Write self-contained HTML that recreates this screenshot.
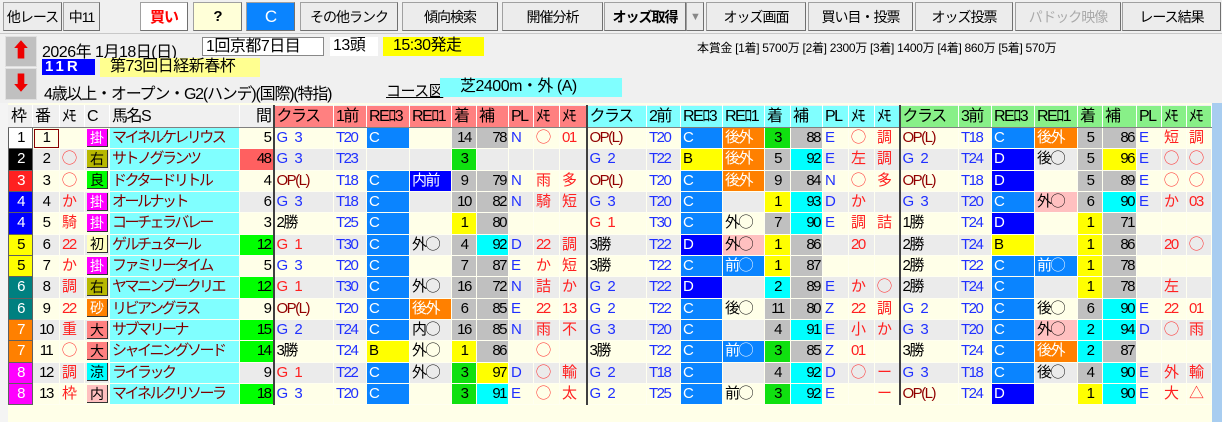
<!DOCTYPE html>
<html><head><meta charset="utf-8"><style>
*{margin:0;padding:0;box-sizing:border-box}
body{width:1222px;height:422px;overflow:hidden;background:#f0f0f0;font-family:"Liberation Sans","Noto Sans CJK JP",sans-serif;position:relative;color:#000}
.bt{position:absolute;top:2px;height:29px;background:#ececec;border:1px solid #a0a0a0;border-right-color:#707070;border-bottom-color:#707070;font-size:14px;display:flex;align-items:center;justify-content:center;letter-spacing:-1px}
.ab{position:absolute;font-size:15px;white-space:nowrap;letter-spacing:-0.5px}
table{position:absolute;left:8px;top:105px;border-collapse:collapse;table-layout:fixed;width:1203px;font-size:15px;letter-spacing:-1.5px}
td{height:21.33px;border:1px solid #fffff0;padding:0 2px;white-space:nowrap;overflow:hidden;line-height:18px}
tr.h td{height:22px;font-size:16px;background:#f0f0f0;border-color:#f0f0f0 #fff #f0f0f0 #f0f0f0;border-bottom:1px solid #808080}
tr.h td.s{background:#ff8080}tr.h td.q{background:#80ffff}tr.h td.n{background:#88f088}
tr.o td{background:#ffffe8}tr.e td{background:#ebebeb}
tr td.nm{background:#80ffff;color:#800000;letter-spacing:-2.5px}
td.w{text-align:center;border:1px solid #606060}
td.r{text-align:right}td.ct{text-align:center}
.L{border-left:2px solid #404040!important}
.bl{color:#2030ff}.rd{color:#ff2020}.dr{color:#900000}
td.bl.L,td.rd.L{letter-spacing:1px}
tr td.c{background:#0a84ff;color:#fff}tr td.d{background:#0000ff;color:#fff}tr td.b{background:#ffff00}
tr td.ko{background:#ff8000;color:#fff}tr td.pk{background:#ffc0c0}
tr td.g{background:#c0c0c0}tr td.y{background:#ffff00}tr td.gr{background:#10e010}tr td.cy{background:#00ffff}tr td.lg{background:#00ff00}tr td.sa{background:#ff6060}
.bd{display:inline-block;width:21px;height:18px;border:1px solid #333;border-width:0 1px 1px 0;text-align:center;letter-spacing:0;font-size:14px}
</style></head><body>
<div class="bt" style="left:3px;width:59px">他レース</div>
<div class="bt" style="left:63px;width:37px">中11</div>
<div class="bt" style="left:140px;width:48px;background:#fff;color:#ff0000;font-weight:bold;font-size:15px">買い</div>
<div class="bt" style="left:193px;width:49px;background:#ffffd8;font-weight:bold;font-size:15px">?</div>
<div class="bt" style="left:246px;width:49px;background:#0a84ff;color:#fff;font-size:17px">C</div>
<div class="bt" style="left:300px;width:98px">その他ランク</div>
<div class="bt" style="left:402px;width:96px">傾向検索</div>
<div class="bt" style="left:502px;width:101px">開催分析</div>
<div class="bt" style="left:604px;width:82px;font-weight:bold">オッズ取得</div>
<div class="bt" style="left:686px;width:18px;color:#888;font-size:11px">▼</div>
<div class="bt" style="left:706px;width:100px">オッズ画面</div>
<div class="bt" style="left:808px;width:105px">買い目・投票</div>
<div class="bt" style="left:915px;width:98px">オッズ投票</div>
<div class="bt" style="left:1015px;width:106px;color:#aaa">パドック映像</div>
<div class="bt" style="left:1122px;width:99px">レース結果</div>
<div style="position:absolute;left:0;top:33px;width:1222px;height:1px;background:#c8c8c8"></div>
<div style="position:absolute;left:5px;top:36px;width:32px;height:31px;background:#c0c0c0;border:1px solid #e0e0e0;color:#e00;font-size:20px;text-align:center;line-height:28px">⬆</div>
<div style="position:absolute;left:5px;top:68px;width:32px;height:32px;background:#c0c0c0;border:1px solid #e0e0e0;color:#e00;font-size:20px;text-align:center;line-height:30px">⬇</div>
<div class="ab" style="left:42px;top:38px;font-size:16px">2026年 1月18日(日)</div>
<div class="ab" style="left:202px;top:37px;width:122px;height:19px;background:#fff;border:1px solid #888;padding-left:3px;line-height:17px;font-size:16px">1回京都7日目</div>
<div class="ab" style="left:330px;top:37px;width:48px;height:19px;background:#fff;padding-left:3px;line-height:17px;font-size:16px">13頭</div>
<div class="ab" style="left:383px;top:37px;width:101px;height:19px;background:#ffff00;padding-left:10px;line-height:18px;font-size:16px">15:30発走</div>
<div class="ab" style="left:42px;top:59px;width:53px;height:16px;background:#0000ff;color:#fff;font-size:15px;line-height:16px;font-weight:bold;letter-spacing:3px;padding-left:3px">11R</div>
<div class="ab" style="left:100px;top:58px;width:160px;height:19px;background:#ffff90;padding-left:10px;line-height:18px;font-size:16px">第73回日経新春杯</div>
<div class="ab" style="left:44px;top:80px;letter-spacing:-1.2px;font-size:16px">4歳以上・オープン・G2(ハンデ)(国際)(特指)</div>
<div class="ab" style="left:386px;top:80px;text-decoration:underline;font-size:15px">コース図</div>
<div class="ab" style="left:440px;top:78px;width:182px;height:19px;background:#80ffff;padding-left:20px;line-height:18px;font-size:16px">芝2400m・外 (A)</div>
<div class="ab" style="left:697px;top:39px;font-size:12px;letter-spacing:-0.3px">本賞金 [1着] 5700万 [2着] 2300万 [3着] 1400万 [4着] 860万 [5着] 570万</div>
<div style="position:absolute;left:0;top:103px;width:1222px;height:319px;background:#ffffe8"></div>
<div style="position:absolute;left:0;top:103px;width:8px;height:319px;background:#f4f4f4"></div>
<div style="position:absolute;left:1212px;top:103px;width:10px;height:319px;background:#a8cdf0"></div>
<table>
<colgroup><col style="width:24px"><col style="width:27px"><col style="width:25px"><col style="width:25px"><col style="width:130px"><col style="width:34px"><col style="width:60px"><col style="width:33px"><col style="width:43px"><col style="width:42px"><col style="width:25px"><col style="width:32px"><col style="width:25px"><col style="width:26px"><col style="width:27px"><col style="width:60px"><col style="width:34px"><col style="width:42px"><col style="width:42px"><col style="width:26px"><col style="width:32px"><col style="width:26px"><col style="width:26px"><col style="width:25px"><col style="width:59px"><col style="width:33px"><col style="width:43px"><col style="width:43px"><col style="width:25px"><col style="width:34px"><col style="width:25px"><col style="width:25px"><col style="width:25px"></colgroup>
<tr class="h"><td>枠</td><td>番</td><td>ﾒﾓ</td><td>C</td><td>馬名S</td><td class="r">間</td><td class="s L">クラス</td><td class="s">1前</td><td class="s">REﾛ3</td><td class="s">REﾛ1</td><td class="s">着</td><td class="s">補</td><td class="s">PL</td><td class="s">ﾒﾓ</td><td class="s">ﾒﾓ</td><td class="q L">クラス</td><td class="q">2前</td><td class="q">REﾛ3</td><td class="q">REﾛ1</td><td class="q">着</td><td class="q">補</td><td class="q">PL</td><td class="q">ﾒﾓ</td><td class="q">ﾒﾓ</td><td class="n L">クラス</td><td class="n">3前</td><td class="n">REﾛ3</td><td class="n">REﾛ1</td><td class="n">着</td><td class="n">補</td><td class="n">PL</td><td class="n">ﾒﾓ</td><td class="n">ﾒﾓ</td></tr>
<tr class="o"><td class="w" style="background:#fff">1</td><td class="ct" style="outline:1px solid #800;outline-offset:-2px">1</td><td></td><td><span class="bd" style="background:#ff00ff;color:#fff">掛</span></td><td class="nm">マイネルケレリウス</td><td class="r">5</td><td class="L bl">G 3</td><td class="bl">T20</td><td class="c">C</td><td></td><td class="g ct">14</td><td class="g r">78</td><td class="bl">N</td><td class="rd">◯</td><td class="rd">01</td><td class="L dr">OP(L)</td><td class="bl">T20</td><td class="c">C</td><td class="ko">後外</td><td class="gr ct">3</td><td class="g r">88</td><td class="bl">E</td><td class="rd">◯</td><td class="rd">調</td><td class="L dr">OP(L)</td><td class="bl">T18</td><td class="c">C</td><td class="ko">後外</td><td class="g ct">5</td><td class="g r">86</td><td class="bl">E</td><td class="rd">短</td><td class="rd">調</td></tr>
<tr class="e"><td class="w" style="background:#000;color:#fff">2</td><td class="ct">2</td><td class="rd">◯</td><td><span class="bd" style="background:#b8b800">右</span></td><td class="nm">サトノグランツ</td><td class="r sa">48</td><td class="L bl">G 3</td><td class="bl">T23</td><td></td><td></td><td class="gr ct">3</td><td></td><td></td><td></td><td></td><td class="L bl">G 2</td><td class="bl">T22</td><td class="b">B</td><td class="ko">後外</td><td class="g ct">5</td><td class="cy r">92</td><td class="bl">E</td><td class="rd">左</td><td class="rd">調</td><td class="L bl">G 2</td><td class="bl">T24</td><td class="d">D</td><td>後◯</td><td class="g ct">5</td><td class="y r">96</td><td class="bl">E</td><td class="rd">◯</td><td class="rd">◯</td></tr>
<tr class="o"><td class="w" style="background:#ff2020;color:#fff">3</td><td class="ct">3</td><td class="rd">◯</td><td><span class="bd" style="background:#00ff00">良</span></td><td class="nm">ドクタードリトル</td><td class="r">4</td><td class="L dr">OP(L)</td><td class="bl">T18</td><td class="c">C</td><td class="d">内前</td><td class="g ct">9</td><td class="g r">79</td><td class="bl">N</td><td class="rd">雨</td><td class="rd">多</td><td class="L dr">OP(L)</td><td class="bl">T20</td><td class="c">C</td><td class="ko">後外</td><td class="g ct">9</td><td class="g r">84</td><td class="bl">N</td><td class="rd">◯</td><td class="rd">多</td><td class="L dr">OP(L)</td><td class="bl">T18</td><td class="d">D</td><td></td><td class="g ct">5</td><td class="g r">89</td><td class="bl">E</td><td class="rd">◯</td><td class="rd">◯</td></tr>
<tr class="e"><td class="w" style="background:#0000ff;color:#fff">4</td><td class="ct">4</td><td class="rd">か</td><td><span class="bd" style="background:#ff00ff;color:#fff">掛</span></td><td class="nm">オールナット</td><td class="r">6</td><td class="L bl">G 3</td><td class="bl">T18</td><td class="c">C</td><td></td><td class="g ct">10</td><td class="g r">82</td><td class="bl">N</td><td class="rd">騎</td><td class="rd">短</td><td class="L bl">G 3</td><td class="bl">T20</td><td class="c">C</td><td></td><td class="y ct">1</td><td class="cy r">93</td><td class="bl">D</td><td class="rd">か</td><td></td><td class="L bl">G 3</td><td class="bl">T20</td><td class="c">C</td><td class="pk">外◯</td><td class="g ct">6</td><td class="cy r">90</td><td class="bl">E</td><td class="rd">か</td><td class="rd">03</td></tr>
<tr class="o"><td class="w" style="background:#0000ff;color:#fff">4</td><td class="ct">5</td><td class="rd">騎</td><td><span class="bd" style="background:#ff00ff;color:#fff">掛</span></td><td class="nm">コーチェラバレー</td><td class="r">3</td><td class="L">2勝</td><td class="bl">T25</td><td class="c">C</td><td></td><td class="y ct">1</td><td class="g r">80</td><td></td><td></td><td></td><td class="L rd">G 1</td><td class="bl">T30</td><td class="c">C</td><td>外◯</td><td class="g ct">7</td><td class="cy r">90</td><td class="bl">E</td><td class="rd">調</td><td class="rd">詰</td><td class="L">1勝</td><td class="bl">T24</td><td class="d">D</td><td></td><td class="y ct">1</td><td class="g r">71</td><td></td><td></td><td></td></tr>
<tr class="e"><td class="w" style="background:#ffff00">5</td><td class="ct">6</td><td class="rd">22</td><td><span class="bd" style="background:#ffffc0">初</span></td><td class="nm">ゲルチュタール</td><td class="r lg">12</td><td class="L rd">G 1</td><td class="bl">T30</td><td class="c">C</td><td>外◯</td><td class="g ct">4</td><td class="cy r">92</td><td class="bl">D</td><td class="rd">22</td><td class="rd">調</td><td class="L">3勝</td><td class="bl">T22</td><td class="d">D</td><td class="pk">外◯</td><td class="y ct">1</td><td class="g r">86</td><td></td><td class="rd">20</td><td></td><td class="L">2勝</td><td class="bl">T24</td><td class="b">B</td><td></td><td class="y ct">1</td><td class="g r">86</td><td></td><td class="rd">20</td><td class="rd">◯</td></tr>
<tr class="o"><td class="w" style="background:#ffff00">5</td><td class="ct">7</td><td class="rd">か</td><td><span class="bd" style="background:#ff00ff;color:#fff">掛</span></td><td class="nm">ファミリータイム</td><td class="r">5</td><td class="L bl">G 3</td><td class="bl">T20</td><td class="c">C</td><td></td><td class="g ct">7</td><td class="g r">87</td><td class="bl">E</td><td class="rd">か</td><td class="rd">短</td><td class="L">3勝</td><td class="bl">T22</td><td class="c">C</td><td class="c">前◯</td><td class="y ct">1</td><td class="g r">87</td><td></td><td></td><td></td><td class="L">2勝</td><td class="bl">T22</td><td class="c">C</td><td class="c">前◯</td><td class="y ct">1</td><td class="g r">78</td><td></td><td></td><td></td></tr>
<tr class="e"><td class="w" style="background:#008080;color:#fff">6</td><td class="ct">8</td><td class="rd">調</td><td><span class="bd" style="background:#b8b800">右</span></td><td class="nm">ヤマニンブークリエ</td><td class="r lg">12</td><td class="L rd">G 1</td><td class="bl">T30</td><td class="c">C</td><td>外◯</td><td class="g ct">16</td><td class="g r">72</td><td class="bl">N</td><td class="rd">詰</td><td class="rd">か</td><td class="L bl">G 2</td><td class="bl">T22</td><td class="d">D</td><td></td><td class="cy ct">2</td><td class="g r">89</td><td class="bl">E</td><td class="rd">か</td><td class="rd">◯</td><td class="L">2勝</td><td class="bl">T24</td><td class="c">C</td><td></td><td class="y ct">1</td><td class="g r">78</td><td></td><td class="rd">左</td><td></td></tr>
<tr class="o"><td class="w" style="background:#008080;color:#fff">6</td><td class="ct">9</td><td class="rd">22</td><td><span class="bd" style="background:#ff8000;color:#fff">砂</span></td><td class="nm">リビアングラス</td><td class="r">9</td><td class="L dr">OP(L)</td><td class="bl">T20</td><td class="c">C</td><td class="ko">後外</td><td class="g ct">6</td><td class="g r">85</td><td class="bl">E</td><td class="rd">22</td><td class="rd">13</td><td class="L bl">G 2</td><td class="bl">T22</td><td class="c">C</td><td>後◯</td><td class="g ct">11</td><td class="g r">80</td><td class="bl">Z</td><td class="rd">22</td><td class="rd">調</td><td class="L bl">G 2</td><td class="bl">T20</td><td class="c">C</td><td>後◯</td><td class="g ct">6</td><td class="cy r">90</td><td class="bl">E</td><td class="rd">22</td><td class="rd">01</td></tr>
<tr class="e"><td class="w" style="background:#ff8000;color:#fff">7</td><td class="ct">10</td><td class="rd">重</td><td><span class="bd" style="background:#ff8080">大</span></td><td class="nm">サブマリーナ</td><td class="r lg">15</td><td class="L bl">G 2</td><td class="bl">T24</td><td class="c">C</td><td>内◯</td><td class="g ct">16</td><td class="g r">85</td><td class="bl">N</td><td class="rd">雨</td><td class="rd">不</td><td class="L bl">G 3</td><td class="bl">T20</td><td class="c">C</td><td></td><td class="g ct">4</td><td class="cy r">91</td><td class="bl">E</td><td class="rd">小</td><td class="rd">か</td><td class="L bl">G 3</td><td class="bl">T20</td><td class="c">C</td><td class="pk">外◯</td><td class="cy ct">2</td><td class="cy r">94</td><td class="bl">D</td><td class="rd">◯</td><td class="rd">雨</td></tr>
<tr class="o"><td class="w" style="background:#ff8000;color:#fff">7</td><td class="ct">11</td><td class="rd">◯</td><td><span class="bd" style="background:#ff8080">大</span></td><td class="nm">シャイニングソード</td><td class="r lg">14</td><td class="L">3勝</td><td class="bl">T24</td><td class="b">B</td><td>外◯</td><td class="y ct">1</td><td class="g r">86</td><td></td><td class="rd">◯</td><td></td><td class="L">3勝</td><td class="bl">T22</td><td class="c">C</td><td class="c">前◯</td><td class="gr ct">3</td><td class="g r">85</td><td class="bl">Z</td><td class="rd">01</td><td></td><td class="L">3勝</td><td class="bl">T24</td><td class="c">C</td><td class="ko">後外</td><td class="cy ct">2</td><td class="g r">87</td><td></td><td></td><td></td></tr>
<tr class="e"><td class="w" style="background:#ff00ff;color:#fff">8</td><td class="ct">12</td><td class="rd">調</td><td><span class="bd" style="background:#00ffff">涼</span></td><td class="nm">ライラック</td><td class="r">9</td><td class="L rd">G 1</td><td class="bl">T22</td><td class="c">C</td><td>外◯</td><td class="gr ct">3</td><td class="y r">97</td><td class="bl">D</td><td class="rd">◯</td><td class="rd">輸</td><td class="L bl">G 2</td><td class="bl">T18</td><td class="c">C</td><td></td><td class="g ct">4</td><td class="cy r">92</td><td class="bl">D</td><td class="rd">◯</td><td class="rd">ー</td><td class="L bl">G 3</td><td class="bl">T18</td><td class="c">C</td><td>後◯</td><td class="g ct">4</td><td class="cy r">90</td><td class="bl">E</td><td class="rd">外</td><td class="rd">輸</td></tr>
<tr class="o"><td class="w" style="background:#ff00ff;color:#fff">8</td><td class="ct">13</td><td class="rd">枠</td><td><span class="bd" style="background:#ffc0c0">内</span></td><td class="nm">マイネルクリソーラ</td><td class="r lg">18</td><td class="L bl">G 3</td><td class="bl">T20</td><td class="c">C</td><td></td><td class="gr ct">3</td><td class="cy r">91</td><td class="bl">E</td><td class="rd">◯</td><td class="rd">太</td><td class="L bl">G 2</td><td class="bl">T25</td><td class="c">C</td><td>前◯</td><td class="gr ct">3</td><td class="cy r">92</td><td class="bl">E</td><td></td><td class="rd">ー</td><td class="L dr">OP(L)</td><td class="bl">T24</td><td class="d">D</td><td></td><td class="y ct">1</td><td class="cy r">90</td><td class="bl">E</td><td class="rd">大</td><td class="rd">△</td></tr>
</table>
</body></html>
